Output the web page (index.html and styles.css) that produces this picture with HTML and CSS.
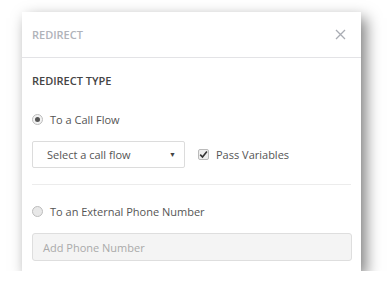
FILE: index.html
```html
<!DOCTYPE html>
<html lang="en">
<head>
    <meta charset="UTF-8">
    <title>Redirect</title>
    <link rel="stylesheet" href="styles.css">
</head>
<body>
    <div class="modal">
        <div class="modal-header">
            <span class="modal-title">REDIRECT</span>
            <svg class="close" width="11" height="11" viewBox="0 0 11 11">
                <path d="M1 1 L10 10 M10 1 L1 10" stroke="#a9acb3" stroke-width="1.3" fill="none"/>
            </svg>
        </div>
        <div class="modal-body">
            <div class="section-title">REDIRECT TYPE</div>
            <label class="option first">
                <span class="radio checked"></span>
                To a Call Flow
            </label>
            <div class="flow-row">
                <div class="select">
                    <span>Select a call flow</span>
                    <span class="caret">&#9660;</span>
                </div>
                <label class="check">
                    <span class="checkbox">
                        <svg width="9" height="9" viewBox="0 0 9 9">
                            <path d="M1.2 4.6 L3.5 7 L7.9 1.6" stroke="#333" stroke-width="1.6" fill="none"/>
                        </svg>
                    </span>
                    Pass Variables
                </label>
            </div>
            <div class="divider"></div>
            <label class="option">
                <span class="radio"></span>
                To an External Phone Number
            </label>
            <div class="phone-input">Add Phone Number</div>
        </div>
    </div>
</body>
</html>
```

FILE: styles.css
```css
body {
    margin: 0;
    background: #fff;
    font-family: "Open Sans", Arial, sans-serif;
    color: #555;
}
.modal {
    margin: 12px 0 0 22px;
    width: 339px;
    height: 259px;
    background: #fff;
    box-shadow: 5px 6px 14px rgba(0, 0, 0, 0.5);
}
.modal-header {
    height: 45px;
    display: flex;
    align-items: center;
    justify-content: space-between;
    padding: 0 15px 0 10px;
    border-bottom: 1px solid #e3e3e6;
}
.modal-title {
    font-size: 11px;
    font-weight: 600;
    color: #b0b3ba;
}
.close {
    display: block;
}
.modal-body {
    padding: 14px 10px 0 10px;
}
.section-title {
    font-size: 11px;
    font-weight: 600;
    color: #444;
    height: 18px;
    line-height: 18px;
}
.option {
    display: flex;
    align-items: center;
    font-size: 11px;
    color: #555;
    height: 18px;
    margin-top: 17px;
}
.option.first {
    margin-top: 20px;
}
.radio {
    width: 9px;
    height: 9px;
    border: 1px solid #bdbdbd;
    border-radius: 50%;
    background: #e8e8e8;
    margin: 0 7px 0 0;
    position: relative;
}
.radio.checked {
    background: #f2f2f2;
}
.radio.checked::after {
    content: "";
    position: absolute;
    left: 2px;
    top: 2px;
    width: 5px;
    height: 5px;
    border-radius: 50%;
    background: #555;
}
.flow-row {
    display: flex;
    align-items: center;
    margin-top: 13px;
}
.select {
    width: 153px;
    height: 27px;
    border: 1px solid #dcdcdc;
    border-radius: 2px;
    display: flex;
    align-items: center;
    justify-content: space-between;
    padding: 0 8px 0 14px;
    box-sizing: border-box;
    font-size: 11px;
    color: #555;
}
.caret {
    font-size: 7px;
    color: #444;
}
.check {
    display: flex;
    align-items: center;
    margin-left: 13px;
    font-size: 11px;
    color: #555;
}
.checkbox {
    width: 9px;
    height: 9px;
    border: 1px solid #bbb;
    border-radius: 2px;
    background: #eee;
    margin-right: 7px;
    display: flex;
    align-items: center;
    justify-content: center;
}
.divider {
    height: 1px;
    background: #ececec;
    margin-top: 16px;
}
.phone-input {
    margin-top: 13px;
    height: 28px;
    box-sizing: border-box;
    border: 1px solid #dedede;
    border-radius: 3px;
    background: #f4f4f4;
    font-size: 11px;
    color: #aaa;
    display: flex;
    align-items: center;
    padding-left: 10px;
    width: 320px;
}
```
